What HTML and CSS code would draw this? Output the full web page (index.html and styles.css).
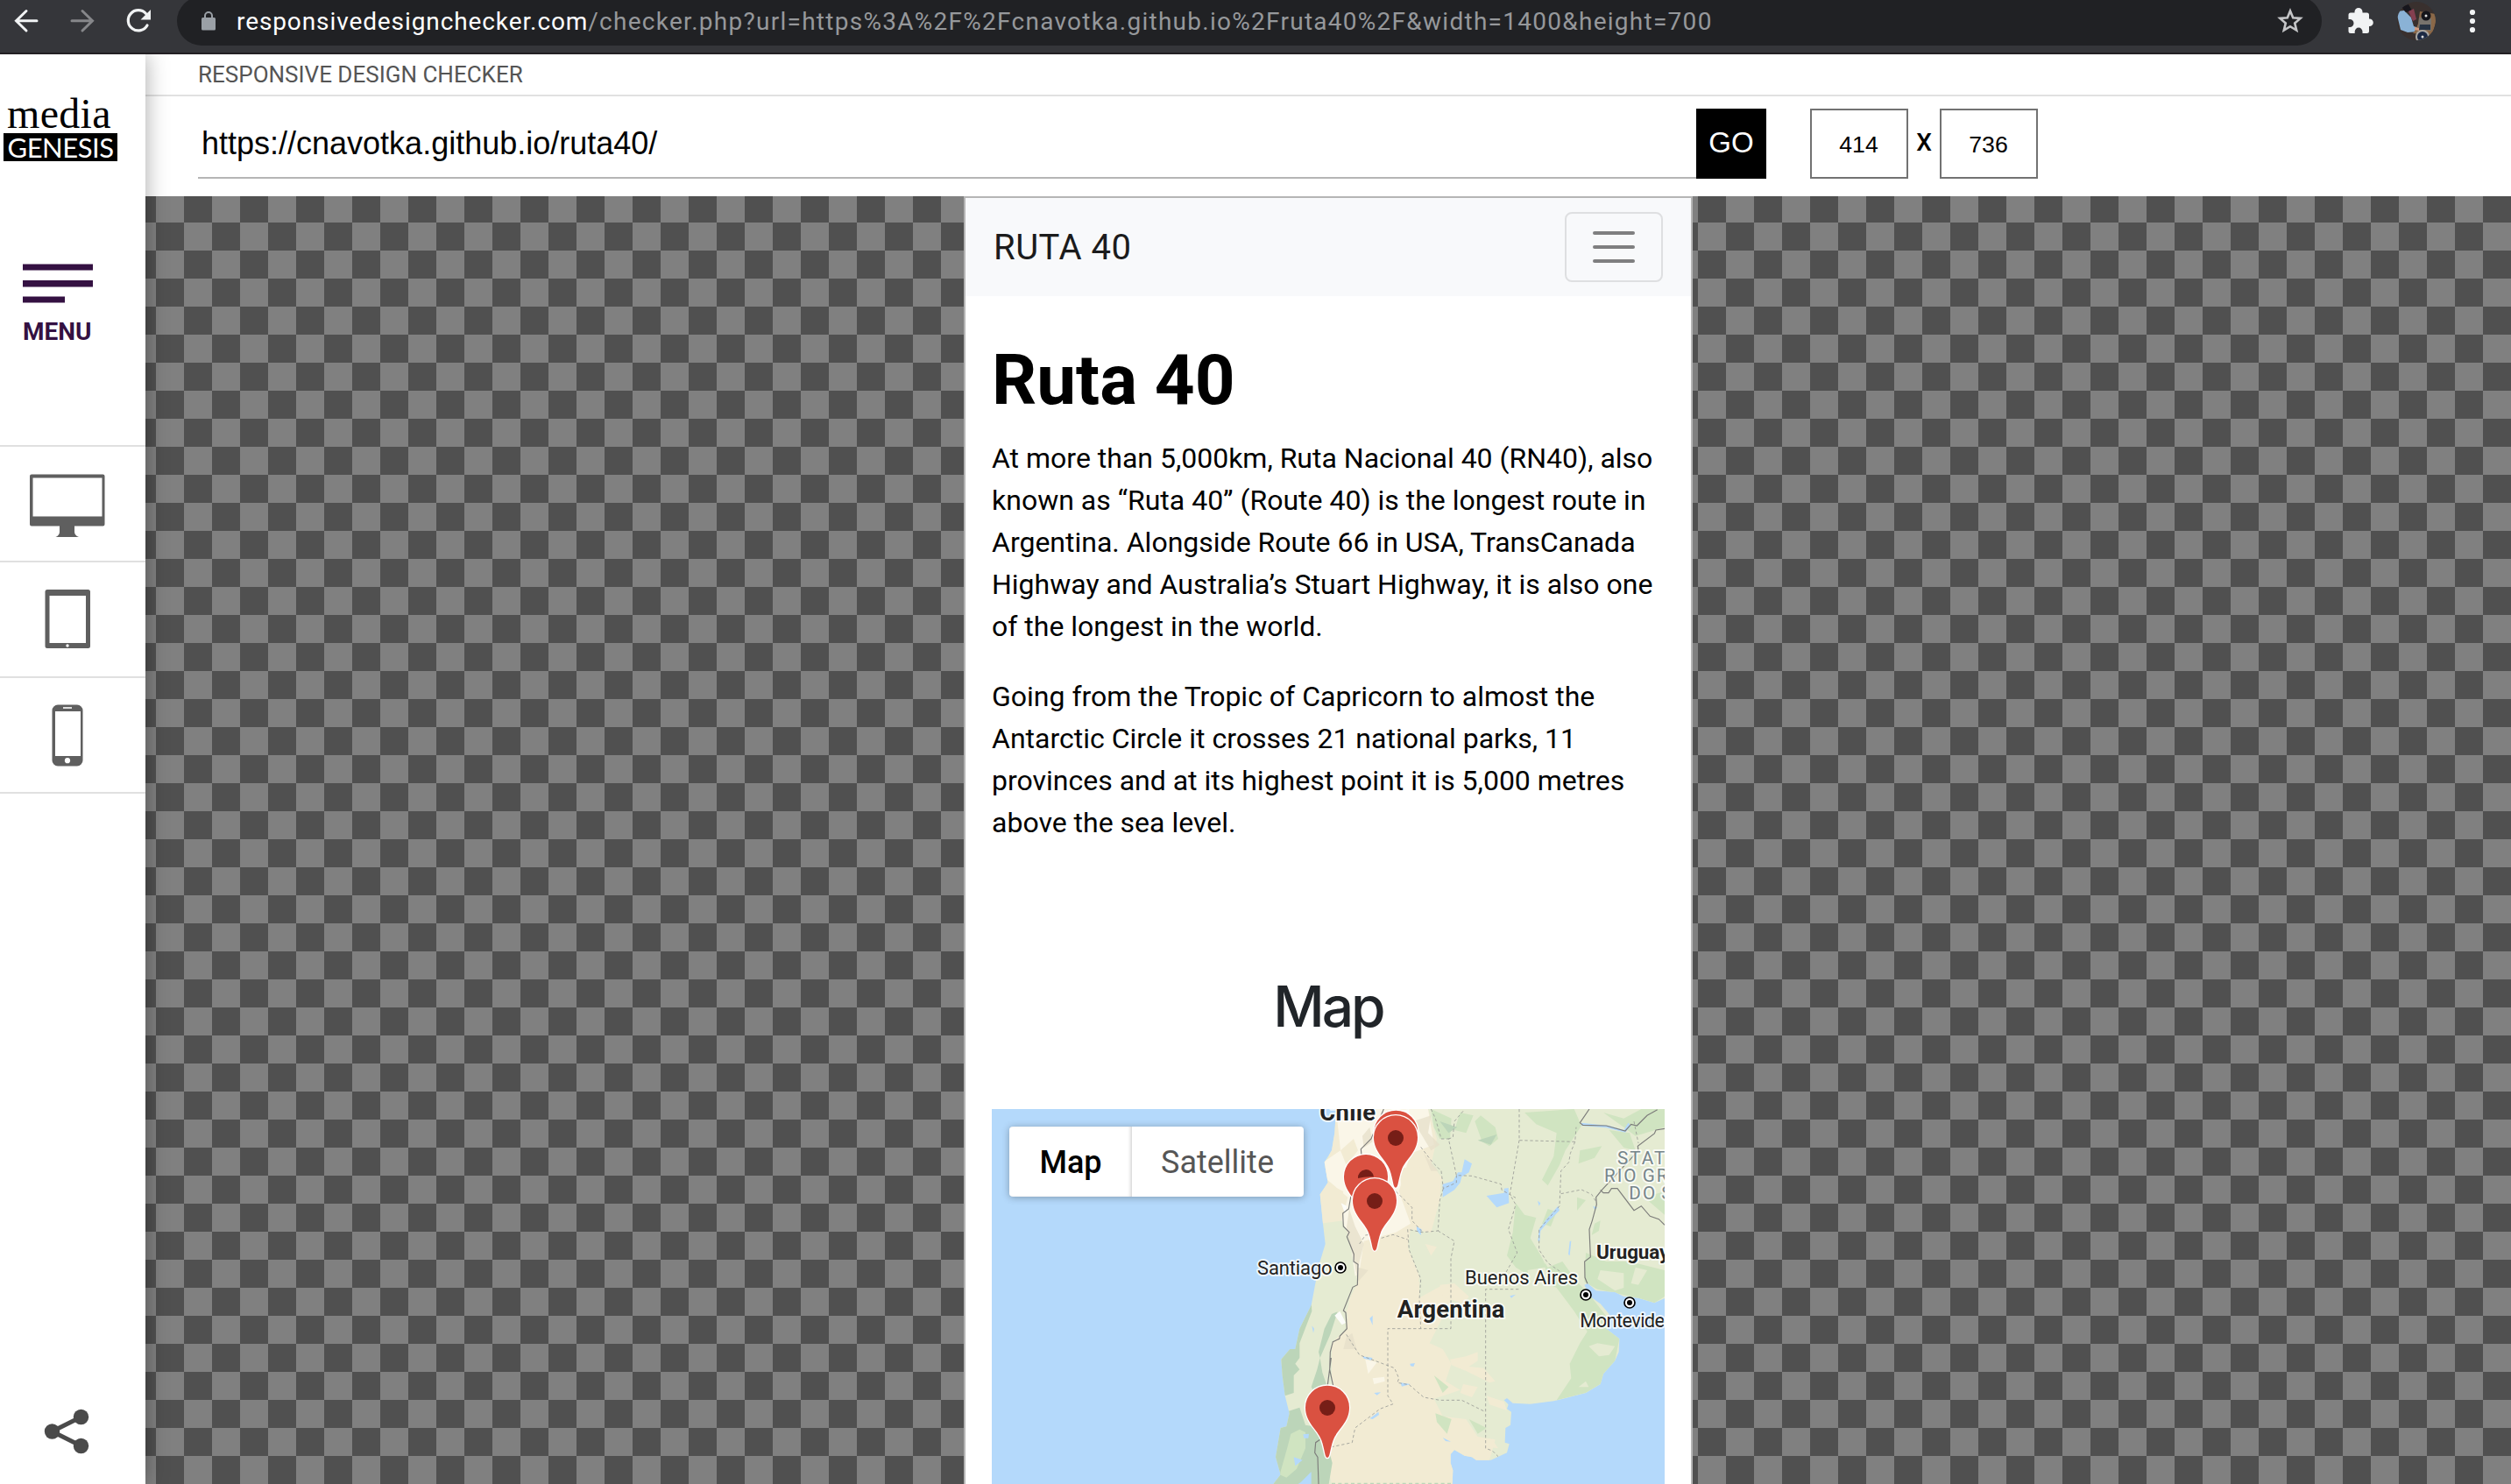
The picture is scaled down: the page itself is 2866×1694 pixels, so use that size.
FILE: index.html
```html
<!DOCTYPE html>
<html lang="en">
<head>
<meta charset="utf-8">
<title>Responsive Design Checker</title>
<link rel="stylesheet" href="styles.css">
</head>
<body>
<div class="toolbar">
  <svg class="nav-icons" viewBox="0 0 202 60" fill="none" stroke-width="3" stroke-linecap="round">
    <path d="M42 23.7H19M30 12.500L18.500 23.700L30 35" stroke="#f1f3f4"/>
    <path d="M82 23.700H105M94 12.500L105.500 23.700L94 35" stroke="#86878a"/>
    <path d="M168 29A11.600 11.600 0 1 1 166.500 15.500" stroke="#f1f3f4" stroke-width="3.200"/>
    <path d="M172 11V22.500H160.500Z" fill="#f1f3f4"/>
  </svg>
  <div class="omnibox">
    <svg class="lock" viewBox="0 0 16 22"><rect y="7" width="16" height="14.500" rx="1.500" fill="#9aa0a6"/><path d="M4 8V5a4 4 0 0 1 8 0V8" fill="none" stroke="#9aa0a6" stroke-width="2"/></svg>
    <div class="address"><span class="host">responsivedesignchecker.com</span><span class="path">/checker.php?url=https%3A%2F%2Fcnavotka.github.io%2Fruta40%2F&amp;width=1400&amp;height=700</span></div>
    <svg class="star" viewBox="0 0 30 30"><path d="M15 3.500L18.200 11.300L26.600 11.900L20.200 17.400L22.200 25.600L15 21.200L7.800 25.600L9.800 17.400L3.400 11.900L11.800 11.300Z" fill="none" stroke="#c4c5c7" stroke-width="2.600"/></svg>
  </div>
  <svg class="tool-icons" viewBox="2650 0 216 60">
    <path d="M2683 14.500H2687.500V13.500a4.500 4.500 0 0 1 9 0V14.500H2701.500a2.500 2.500 0 0 1 2.500 2.500V21.500H2704.500a4.300 4.300 0 0 1 0 8.600H2704V35.500a2.500 2.500 0 0 1-2.500 2.500H2696.500V36a4.400 4.400 0 0 0-8.800 0V38H2683a2.500 2.500 0 0 1-2.500-2.500V31H2682a4.500 4.500 0 0 0 0-9H2680.500V17a2.500 2.500 0 0 1 2.500-2.500Z" fill="#f1f3f4"/>
    <clipPath id="avatar"><circle cx="2758" cy="24" r="22"/></clipPath>
    <g clip-path="url(#avatar)">
      <path d="M2736 2h44v44h-44z" fill="#39302e"/>
      <path d="M2735 13L2744 12L2752 20L2755 30L2761 32L2760 36L2748 37L2740 34Z" fill="#8ab2d6"/>
      <path d="M2741 8L2749 5L2753 12L2746 14Z" fill="#17161d"/>
      <path d="M2749 13L2755 10L2758 22L2754 24Z" fill="#843f50"/>
      <path d="M2762 13L2780 16V26L2776 40L2754 38L2757 34L2760 27Z" fill="#8b6848"/>
      <path d="M2761 20L2775 21V35L2760 34Z" fill="#77736d"/>
      <path d="M2762 28H2774V34H2761Z" fill="#273343"/>
      <circle cx="2769" cy="18" r="5.500" fill="#14151b"/><circle cx="2769" cy="18" r="1.500" fill="#ddd"/>
      <circle cx="2765" cy="42" r="8" fill="#a9a6a2"/><circle cx="2765" cy="42" r="6" fill="#1c2944"/><circle cx="2765" cy="42" r="1.500" fill="#ddd"/>
      <path d="M2756 31L2761 32V35L2756 34Z" fill="#d29b82"/>
    </g>
    <g fill="#f1f3f4"><circle cx="2822" cy="14" r="3.100"/><circle cx="2822" cy="24" r="3.100"/><circle cx="2822" cy="34" r="3.100"/></g>
  </svg>
</div>

<div class="layout">
  <aside class="sidebar">
    <div class="logo"><div class="logo-top">media</div><div class="logo-bottom">GENESIS</div></div>
    <div class="menu">
      <svg viewBox="0 0 80 46" fill="#341142"><path d="M0 1.500H80V8.500H0zM0 20H80V27.500H0zM0 38.500H48V45.500H0z"/></svg>
      <div class="menu-label">MENU</div>
    </div>
    <div class="device"><svg viewBox="0 510 166 130"><path fill="#5f5f5f" fill-rule="evenodd" d="M36 541.500H117.500a2 2 0 0 1 2 2V598.500a2 2 0 0 1-2 2H85V607Q85 611 90 613H63.500Q68 611 68 607V600.500H36a2 2 0 0 1-2-2V543.500a2 2 0 0 1 2-2ZM37.500 545.500V589.500H116.500V545.500Z"/></svg></div>
    <div class="device"><svg viewBox="0 642 166 130"><path fill="#5f5f5f" fill-rule="evenodd" d="M54 673H100.500a2.500 2.500 0 0 1 2.500 2.500V737.500a2.500 2.500 0 0 1-2.500 2.500H54a2.500 2.500 0 0 1-2.500-2.500V675.500A2.500 2.500 0 0 1 54 673ZM56.500 680V734H98V680Z"/><circle cx="77" cy="737" r="1.700" fill="#fff"/></svg></div>
    <div class="device"><svg viewBox="0 774 166 130"><path fill="#5f5f5f" fill-rule="evenodd" d="M66 804.500H88a6.500 6.500 0 0 1 6.500 6.500V868a6.500 6.500 0 0 1-6.500 6.500H66a6.500 6.500 0 0 1-6.500-6.500V811a6.500 6.500 0 0 1 6.500-6.500ZM63 812V863H92V812Z"/><circle cx="77" cy="868.200" r="3.100" fill="#fff"/><path d="M72 808H82" stroke="#fff" stroke-width="1.600"/></svg></div>
    <svg class="share" viewBox="50 1608 52 52"><path d="M92.500 1617.500L59.500 1634L92.500 1650.500" fill="none" stroke="#4a4a4a" stroke-width="5"/><g fill="#4a4a4a"><circle cx="59.500" cy="1634" r="8.700"/><circle cx="92.500" cy="1617.500" r="8.700"/><circle cx="92.500" cy="1650.500" r="8.700"/></g></svg>
  </aside>

  <main class="main">
    <div class="title-row"><span class="title">RESPONSIVE DESIGN CHECKER</span></div>
    <div class="form-row">
      <div class="url-input"><span class="url-text">https://cnavotka.github.io/ruta40/</span></div>
      <div class="go">GO</div>
      <div class="dim">414</div>
      <div class="times">X</div>
      <div class="dim">736</div>
    </div>
    <div class="stage">
      <div class="frame">
        <div class="navbar">
          <span class="brand">RUTA 40</span>
          <div class="toggler"><i></i><i></i><i></i></div>
        </div>
        <div class="content">
          <h1><span class="h1-text">Ruta 40</span></h1>
          <p>At more than 5,000km, Ruta Nacional 40 (RN40), also<br>known as “Ruta 40” (Route 40) is the longest route in<br>Argentina. Alongside Route 66 in USA, TransCanada<br>Highway and Australia’s Stuart Highway, it is also one<br>of the longest in the world.</p>
          <p>Going from the Tropic of Capricorn to almost the<br>Antarctic Circle it crosses 21 national parks, 11<br>provinces and at its highest point it is 5,000 metres<br>above the sea level.</p>
          <h2><span class="h2-text">Map</span></h2>
          <div class="map">
            <svg class="map-canvas" viewBox="-1104 48 2304 1284">
              <defs>
                <path id="pin" d="M0 0C-9 0-8-26-20-60C-34-98-75-120-75-172A75 75 0 0 1 75-172C75-120 34-98 20-60C8-26 9 0 0 0Z"/>
                <clipPath id="land"><path d="M75 48L70 130L60 190L35 230L47 300L20 340L30 440L38 510L20 570L5 640L-10 720L-50 800L-65 870L-83 870L-113 905L-109 960L-100 1030L-85 1090L-95 1135L-115 1140L-132 1240L-115 1300L-140 1332H473L475 1285L467 1260V1230L480 1215L515 1235L540 1240L555 1250H605L660 1225L668 1195L653 1190L655 1140L672 1130L675 1085L660 1075L665 1060L650 1045L660 1038L680 1055L740 1058L820 1048L930 1020L980 990L990 955L1030 910L1043 880L1045 835L1000 800L1010 750L980 715L945 690L925 650L937 645L965 670L1030 675L1060 690L1110 695L1165 712L1200 696V48Z"/></clipPath>
              </defs>
              <path d="M-1104 48H1200V1332H-1104Z" fill="#b4d9fb"/>
              <g clip-path="url(#land)">
                <path d="M-1104 48H1200V1332H-1104Z" fill="#e5ebd2"/>
                <path d="M75 48H390L420 150L400 240L435 280L430 360L400 470L330 460L320 520L360 620L350 700L440 650L470 700L420 800L395 850L440 870L470 920L450 980L500 1010L410 1040L440 1100L520 1110L560 1170L620 1180L600 1250L473 1332H60L40 1240L60 1000L60 850L110 800L120 700L150 640L120 480L100 430L20 440L10 330L60 180Z" fill="#f2ebd3"/>
                <path d="M75 48H390L410 170L330 200L290 330L330 440L280 470L240 510L180 520L170 600L140 620L120 480L95 430L115 350L45 290L30 230L90 190Z" fill="#faf6e8"/>
                <path d="M90 190L135 150L150 190L110 240ZM290 250L410 245L440 290L400 340L330 350L300 320ZM40 300L100 330L90 380L25 370ZM170 500L280 470L320 500L330 620L360 640V800H130L110 740L150 640Z" fill="#f2ebd3"/>
                <path d="M465 905L520 895L560 880L560 910L530 930L580 935L620 980L600 985L520 945L470 925ZM430 650L480 645L530 690L510 715L440 690ZM510 990L560 1000L540 1035L500 1020ZM590 1030L650 1050L660 1080L600 1060ZM550 1170L610 1180L630 1210L560 1200ZM380 510L420 520L400 550Z" fill="#f2ebd3"/>
                <path d="M400 48L470 80L465 150L430 150L410 110ZM500 60L545 70L520 130L480 120ZM570 70L620 110L630 150L600 175L575 160L550 90ZM720 60L890 48L915 105L860 190L840 240L800 310L780 290L820 210L830 130L760 100ZM910 190L985 175L960 215L905 235ZM690 370L720 410L760 420L740 490L800 590L850 570L900 640L940 680L1010 770L1045 835L1030 910L980 990L930 1020L830 1045L880 970L875 920L910 850L935 810L890 740L830 660L740 620L690 590L660 550L680 470ZM800 390L830 400L810 450L780 440ZM900 350L930 360L900 395ZM960 440L980 430L975 465L950 480ZM930 540L1000 570L1080 570L1200 600V690L1165 712L1110 695L970 665L925 640ZM990 60L1060 80L1120 48H1200V110L1100 140L1060 110ZM1010 120L1080 130L1100 190L1060 180ZM1130 350L1200 330V410ZM410 960L460 1000L440 1020ZM415 1090L470 1110L455 1160L420 1120ZM530 1110L590 1140L560 1160Z" fill="#d0e4c1"/>
                <path d="M980 600L1060 610L1060 660L1030 670L970 630ZM1100 590L1140 600L1110 650L1085 645ZM940 860L970 850L1030 860L1010 890L975 895ZM905 1000L930 980L940 1000ZM765 520L800 540L790 580ZM730 600L790 590L800 620L740 640Z" fill="#e5ebd2"/>
                <path d="M-10 700L-8 740L-50 850L-50 900L-65 920L-50 940L-70 960V1020L-100 1030L-150 900L-60 780ZM60 750L80 742L55 820L20 900L15 880L35 800ZM10 940L20 900L28 950L45 1000L35 1080L-10 1000ZM-110 1090L-50 1070L-30 1130L30 1140L62 1260L50 1332H-150V1130ZM560 155L625 135L605 170ZM430 90L490 110L460 130Z" fill="#bcd5b9"/>
                <path d="M-80 1160L-50 1145L-30 1155V1210L-60 1280L-95 1310L-118 1300L-90 1200Z" fill="#d0e4c1"/>
                <path d="M-45 1325L-10 1290V1332H-55ZM-70 1240L-40 1250L-65 1270ZM-38 1162L-18 1160L-20 1175L-35 1175Z" fill="#b4d9fb"/>
                <path d="M340 90L400 70L390 130L430 170L400 190ZM120 390L140 450L170 510L150 590L185 600L150 640L135 560L110 460ZM110 830L130 815L145 870L100 870ZM375 200L425 260L400 260ZM165 140L190 110L200 160L170 180Z" fill="#e6dfca" opacity=".75"/>
                <path d="M70 755L88 740L108 780L95 787ZM92 370L112 380L105 405ZM270 60L325 48V70Z" fill="#fbfcf9"/>
                <path d="M175 905L215 915L185 955ZM200 970L240 965L242 980L205 990Z" fill="#faf6e8"/>
                <path d="M515 220L540 235L530 265L505 280L500 300L480 325L440 350L440 305L475 295L492 265H505ZM590 345L650 335L650 320L665 318L667 370L625 385ZM190 765L200 755V788ZM328 920L345 918L340 930L330 928ZM205 1020L228 1018L215 1028ZM190 1108L220 1085L222 1095L200 1110ZM350 450L368 460L365 480L352 465ZM765 362L775 370L770 380ZM670 688L690 683L675 695ZM915 95L1010 105L1060 120L1075 95L1085 105L1065 128L1000 112L915 105ZM835 380L840 395L800 435L775 465L772 500L766 500L770 460L795 425ZM875 500L880 500L875 550L870 545ZM440 1173L468 1187L450 1185ZM165 895L200 900L195 908L170 902ZM955 380L970 385L960 392ZM295 985L330 990L300 998ZM-8 790L0 800L-3 815Z" fill="#b4d9fb"/>
                <path d="M702 48V155L893 160L897 110M702 155L670 340L690 375L665 460L695 540L655 610M893 160L877 200L872 230L845 260L840 380L770 460V530L800 575L850 610M845 338L915 324L950 340L965 365M510 55L480 90L475 145L460 150L487 275L540 277L640 305L642 325L690 352M365 178L405 230L435 260L442 320L487 300V275M442 320L430 360L424 465L370 470L320 460L325 530L365 630L360 700L365 800M424 465L480 500L468 560V800H252V1030L270 1058L225 1075L140 1140L130 1190L60 1205M280 330L335 385L335 430L370 468M230 490L270 478L320 495M155 510L175 480L215 475M700 665H587V1210L610 1218L630 1238M110 820L155 890L275 935L290 970L285 985L325 992L375 1035L430 1045H505L580 1082M1095 90L1110 165M400 48L415 80L435 150H465" fill="none" stroke="#999a96" stroke-width="2.500" stroke-dasharray="10 8"/>
                <path d="M238 48L195 150L160 185L165 240L125 350L118 390L98 405L100 450L120 470L112 485L136 545L135 570L150 580L148 650L132 658L100 738L108 745L112 800L88 825L86 835L64 845L55 880L53 940L66 1000M58 900L45 1000M20 1180L5 1190L2 1225L12 1240L15 1332M942 48L910 95L920 103L1000 105L1065 123L1085 100L1105 105L1140 70L1175 50M1200 115L1170 120L1165 132L1108 175L1110 190L985 325L965 350L967 375L952 430L942 460L946 555L926 570L927 625L938 652M980 325L990 335L1008 335L1018 320H1038L1095 395L1120 380L1150 415L1180 425L1200 445" fill="none" stroke="#7d7d7b" stroke-width="3.500"/>
                <path d="M60 1331H473" stroke="#bcd5b9" stroke-width="5" stroke-dasharray="12 10"/>
              </g>
              <g class="map-label">
                <text class="country" x="19" y="88" font-size="82" textLength="191">Chile</text>
                <text class="country" x="284" y="762" font-size="83" textLength="368">Argentina</text>
                <text class="country" x="966" y="560" font-size="68" textLength="250">Uruguay</text>
                <text x="-195" y="615" font-size="66" textLength="257">Santiago</text>
                <text x="516" y="648" font-size="66" textLength="387">Buenos Aires</text>
                <text x="910" y="795" font-size="66" textLength="326">Montevideo</text>
                <g class="region"><text x="1038" y="237">STATE OF</text><text x="993" y="297">RIO GRANDE</text><text x="1078" y="357">DO SUL</text></g>
              </g>
              <g fill="#fff" stroke="#000" stroke-width="5"><circle cx="90" cy="591" r="18"/><circle cx="930" cy="684" r="18"/><circle cx="1080" cy="711" r="18"/></g>
              <circle cx="90" cy="591" r="9"/><circle cx="930" cy="684" r="9"/><circle cx="1080" cy="711" r="9"/>
              <g fill="#da5141" stroke="#fff" stroke-width="8" paint-order="stroke">
                <use href="#pin" x="280" y="300"/>
                <use href="#pin" x="279" y="317"/>
                <use href="#pin" x="177" y="451"/>
                <use href="#pin" x="207" y="533"/>
                <use href="#pin" x="45" y="1242"/>
              </g>
              <g fill="#761e17"><circle cx="279" cy="147" r="27"/><path d="M150 285A27 27 0 1 1 204 280Q175 278 150 285Z"/><circle cx="207" cy="363" r="27"/><circle cx="45" cy="1071" r="27"/></g>
            </svg>
            <div class="map-type"><div class="map-on">Map</div><div class="map-off">Satellite</div></div>
          </div>
        </div>
      </div>
    </div>
  </main>
</div>
</body>
</html>
```

FILE: styles.css
```css
* { box-sizing: border-box; }
body { margin: 0; width: 2866px; height: 1694px; overflow: hidden; background: #fff; font-family: Roboto, sans-serif; display: flex; flex-direction: column; }
svg { display: block; flex: none; }
.toolbar { height: 62px; flex: none; display: flex; background: #35363a; border-bottom: 2px solid #231f23; overflow: hidden; }
.nav-icons { width: 202px; height: 60px; }
.omnibox { width: 2448px; height: 56px; margin-top: -4px; border-radius: 28px; background: #202124; display: flex; align-items: center; padding: 0 21px 0 28px; }
.lock { width: 16px; height: 22px; }
.address { flex: 1; margin-left: 24px; font-size: 28px; line-height: 36px; padding-top: 1px; white-space: nowrap; }
.host { color: #fff; letter-spacing: 0.900px; }
.path { color: #96989b; letter-spacing: 1.270px; }
.star { width: 30px; height: 30px; }
.tool-icons { width: 216px; height: 60px; }

.layout { flex: 1; display: flex; min-height: 0; }
.sidebar { width: 166px; flex: none; display: flex; flex-direction: column; background: #fff; box-shadow: 0 0 24px rgba(0, 0, 0, 0.350); z-index: 1; clip-path: inset(0 -30px 0 0); }
.logo { height: 238px; padding: 46px 0 0 4px; }
.logo-top { height: 44px; padding-left: 4px; font: 48px/44px "Liberation Serif", serif; color: #000; letter-spacing: 0.300px; }
.logo-bottom { width: 130px; height: 32px; background: #000; color: #fff; font: 31px/32px Lato, sans-serif; letter-spacing: -0.500px; text-align: center; white-space: nowrap; }
.menu { height: 208px; padding: 0 26px; color: #341142; }
.menu svg { width: 80px; height: 46px; }
.menu-label { font-size: 28px; font-weight: 700; line-height: 36px; margin-top: 15px; }
.device { height: 132px; border-top: 2px solid #e0e0e0; }
.device:nth-of-type(5) { height: 134px; border-bottom: 2px solid #e0e0e0; }
.device svg { width: 166px; height: 130px; }
.share { width: 52px; height: 52px; margin: auto 0 34px 50px; }

.main { flex: 1; display: flex; flex-direction: column; min-width: 0; }
.title-row { height: 48px; flex: none; border-bottom: 2px solid #e1e1e1; padding-left: 60px; color: #555; font-size: 26px; line-height: 46px; }
.form-row { height: 114px; flex: none; display: flex; padding: 14px 0 0 60px; color: #000; font-family: "Liberation Sans", sans-serif; }
.url-input { width: 1710px; height: 80px; border-bottom: 2px solid #b5b5b5; padding-left: 4px; font-size: 36px; line-height: 80px; }
.go { width: 80px; height: 80px; background: #000; color: #fff; font-size: 33px; line-height: 78px; text-align: center; margin-right: 50px; }
.dim { width: 112px; height: 80px; border: 2px solid #727272; font-size: 26.670px; line-height: 78px; text-align: center; padding-right: 1px; }
.times { width: 36px; font: 500 28px/78px Roboto, sans-serif; text-align: center; }
.stage { flex: 1; min-height: 0; padding-left: 934px; background: conic-gradient(#808080 25%, #505050 0 50%, #808080 0 75%, #505050 0) -20px -2px / 64px 64px; }
.frame { width: 832px; height: 100%; border: 2px solid #b5b5b5; border-bottom: 0; background: #fff; overflow: hidden; }
.navbar { height: 112px; background: #f8f9fb; display: flex; align-items: center; justify-content: space-between; padding: 0 32px; }
.brand { font-size: 40px; line-height: 60px; padding-top: 1px; letter-spacing: 0.500px; color: #1b1b1c; }
.toggler { width: 112px; height: 80px; border: 2px solid #dedfe1; border-radius: 8px; display: flex; flex-direction: column; align-items: center; justify-content: center; gap: 12px; }
.toggler i { width: 48px; height: 4px; border-radius: 2px; background: #7f7f80; }
.content { padding: 0 30px; color: #000; }
h1 { margin: 48px 0 0; height: 113px; font-size: 80px; line-height: 96px; font-weight: 700; }
p { margin: 0 0 32px; font-size: 32px; line-height: 48px; white-space: nowrap; }
h2 { margin: 148px 0 0; height: 155px; font: 500 64px/76px Inter, sans-serif; letter-spacing: -3px; text-align: center; color: #212529; }
.map { position: relative; width: 768px; height: 428px; overflow: hidden; }
.map-canvas { width: 768px; height: 428px; }
.map-type { position: absolute; left: 20px; top: 20px; display: flex; height: 80px; border-radius: 4px; background: #fff; box-shadow: 0 1px 8px rgba(0, 0, 0, 0.300); font-size: 36px; line-height: 83px; text-align: center; }
.map-on { width: 140px; font-weight: 500; color: #000; box-shadow: inset -3px 0 4px -2px rgba(0, 0, 0, 0.220); }
.map-off { width: 196px; padding-right: 1px; color: #565656; }
.map-label { font-family: Roboto, sans-serif; fill: #222; stroke: #fff; stroke-opacity: 0.750; stroke-width: 12px; stroke-linejoin: round; paint-order: stroke; }
.country { font-weight: 700; }
.region { font-size: 62px; fill: #76858a; letter-spacing: 6px; word-spacing: -6px; }
```
